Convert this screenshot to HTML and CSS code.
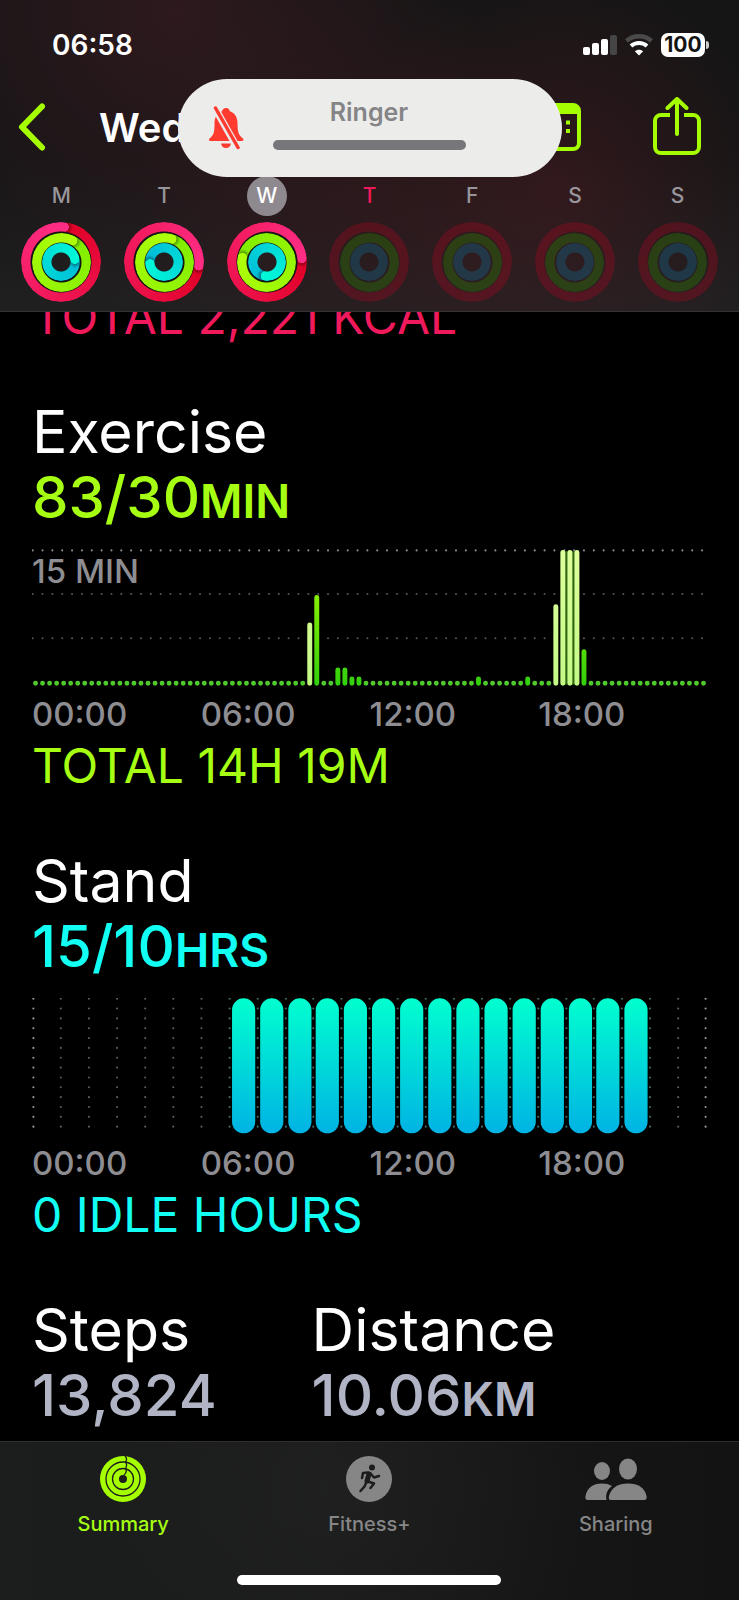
FILE: index.html
```
<!DOCTYPE html>
<html lang="en">
<head>
  <meta charset="UTF-8">
  <meta name="viewport" content="width=device-width, initial-scale=1.0">
  <title>Fitness</title>
  <link rel="stylesheet" href="styles.css">
</head>
<body>
  <header class="top">
    <div class="status">
      <span class="clock">06:58</span>
      <div class="status-icons">
        <svg width="34" height="22" viewBox="0 0 34 22" fill="#fff" aria-hidden="true">
          <rect x="0" y="13" width="7" height="8" rx="2"/>
          <rect x="9" y="9" width="7" height="12" rx="2"/>
          <rect x="18" y="5" width="7" height="16" rx="2"/>
          <rect x="27" y="1" width="7" height="20" rx="2" fill="#454545"/>
        </svg>
        <svg width="28" height="22" viewBox="0 0 28 22" fill="none" stroke="#fff" aria-hidden="true">
          <path d="M1.500 7C8.500.8 19.500.8 26.500 7" stroke="#4a4a4a" stroke-width="4.500"/>
          <path d="M6 12C10.500 8 17.500 8 22 12" stroke-width="4"/>
          <path d="M14 21.500L9.800 17.300C12 15.200 16 15.200 18.200 17.300Z" fill="#fff" stroke="none"/>
        </svg>
        <div class="battery">100</div>
      </div>
    </div>

    <div class="title-bar">
      <button class="icon-btn" aria-label="Back">
        <svg width="28" height="48" viewBox="0 0 28 48" aria-hidden="true"><path d="M24 3.500L4 24L24 44.500" stroke-width="6"/></svg>
      </button>
      <h1>Wednesday</h1>
      <button class="icon-btn" aria-label="Calendar">
        <svg width="48" height="50" viewBox="0 0 48 50" aria-hidden="true">
          <rect x="2" y="3" width="44" height="44" rx="6" stroke-width="4"/>
          <path d="M2 12V8a6 6 0 0 1 6-6H40a6 6 0 0 1 6 6V12Z" fill="#a6ff00" stroke="none"/>
          <path d="M11 20.500h4M22 20.500h4M33 20.500h4M11 29h4M22 29h4M33 29h4" stroke-width="4" stroke-linecap="butt"/>
        </svg>
      </button>
      <button class="icon-btn" aria-label="Share">
        <svg width="48" height="60" viewBox="0 0 48 60" aria-hidden="true">
          <path d="M17 18H8a6 6 0 0 0-6 6V50a6 6 0 0 0 6 6H40a6 6 0 0 0 6-6V24a6 6 0 0 0-6-6H31" stroke-width="4" stroke-linecap="butt"/>
          <path d="M24 37V2.500M14.500 11L24 2L33.500 11" stroke-width="4"/>
        </svg>
      </button>
    </div>

    <div class="week">
      <button class="day">
        <span class="letter">M</span>
        <span class="rings">
          <span class="ring move" style="--tip: 5deg"></span>
          <span class="ring exercise" style="--tip: 27deg"></span>
          <span class="ring stand" style="--tip: 78deg"></span>
        </span>
      </button>
      <button class="day">
        <span class="letter">T</span>
        <span class="rings">
          <span class="ring move" style="--tip: 96deg"></span>
          <span class="ring exercise" style="--tip: 17deg"></span>
          <span class="ring stand" style="--tip: 262deg"></span>
        </span>
      </button>
      <button class="day selected">
        <span class="letter">W</span>
        <span class="rings">
          <span class="ring move" style="--tip: 84deg"></span>
          <span class="ring exercise" style="--tip: 281deg"></span>
          <span class="ring stand" style="--tip: 186deg"></span>
        </span>
      </button>
      <button class="day today empty">
        <span class="letter">T</span>
        <span class="rings"><span class="ring move"></span><span class="ring exercise"></span><span class="ring stand"></span></span>
      </button>
      <button class="day empty">
        <span class="letter">F</span>
        <span class="rings"><span class="ring move"></span><span class="ring exercise"></span><span class="ring stand"></span></span>
      </button>
      <button class="day empty">
        <span class="letter">S</span>
        <span class="rings"><span class="ring move"></span><span class="ring exercise"></span><span class="ring stand"></span></span>
      </button>
      <button class="day empty">
        <span class="letter">S</span>
        <span class="rings"><span class="ring move"></span><span class="ring exercise"></span><span class="ring stand"></span></span>
      </button>
    </div>
  </header>

  <div class="ringer" role="status">
    <svg width="36" height="44" viewBox="0 0 36 44" aria-hidden="true">
      <path d="M18 2c2.500 0 3.600 1.600 3.800 3.200C27 7 29.500 11.500 29.500 17c0 9 1 12 5.500 15.500c1 1 .5 2.500-1 2.500H2.500c-1.500 0-2-1.500-1-2.500C6 29 6.500 26 6.500 17c0-5.500 2.500-10 7.700-11.800C14.400 3.600 15.500 2 18 2Z" fill="#ff3b30"/>
      <path d="M13 37.500h10c-.5 3-2.500 4.500-5 4.500s-4.500-1.500-5-4.500Z" fill="#ff3b30"/>
      <path d="M7 2L30 43" stroke="#ececec" stroke-width="7"/>
      <path d="M7.500 2L30 41.500" stroke="#ff3b30" stroke-width="3.500" stroke-linecap="round"/>
    </svg>
    <div class="ringer-level">
      <span>Ringer</span>
      <div class="ringer-bar"></div>
    </div>
  </div>

  <main>
    <section class="metric move-text">
      <p class="total">TOTAL 2,221 KCAL</p>
    </section>

    <section class="metric exercise-text">
      <h2>Exercise</h2>
      <p class="value">83/30<small>MIN</small></p>
      <div class="chart">
        <!-- 96 slots of 15 minutes, 10 units each -->
        <svg viewBox="0 0 960 195" fill="none" stroke-linecap="round" aria-hidden="true">
          <defs>
            <linearGradient id="green" gradientUnits="userSpaceOnUse" x1="0" y1="0" x2="0" y2="195">
              <stop offset="0" stop-color="#b4ff00"/>
              <stop offset="1" stop-color="#30cf0c"/>
            </linearGradient>
            <linearGradient id="pale" gradientUnits="userSpaceOnUse" x1="0" y1="0" x2="0" y2="195">
              <stop offset="0" stop-color="#deff9c"/>
              <stop offset="1" stop-color="#c4fa86"/>
            </linearGradient>
          </defs>
          <g stroke-width="3" stroke-dasharray="0 14">
            <path d="M1 2H958" stroke="#8a8a8a"/>
            <path d="M1 64H958M1 127H958" stroke="#565656"/>
          </g>
          <path d="M5 191H386M415 191H426M475 191H626M645 191H696M715 191H736M795 191H956" stroke="#4fc92c" stroke-width="7" stroke-dasharray="0 10"/>
          <rect x="752" y="3" width="26" height="190" fill="#2f6510"/>
          <path d="M405 69V191M435 172V191M445 172V191M455 185V191M465 185V191M635 185V191M705 185V191M785 146V191" stroke="url(#green)" stroke-width="7"/>
          <path d="M395 108V191M745 82V191M755 5V191M765 5V191M775 5V191" stroke="url(#pale)" stroke-width="7"/>
        </svg>
        <span class="scale">15 MIN</span>
      </div>
      <div class="hours"><span>00:00</span><span>06:00</span><span>12:00</span><span>18:00</span></div>
      <p class="total">TOTAL 14H 19M</p>
    </section>

    <section class="metric stand-text">
      <h2>Stand</h2>
      <p class="value">15/10<small>HRS</small></p>
      <div class="chart">
        <!-- 24 hours, 40 units each -->
        <svg viewBox="0 0 960 195" fill="none" stroke-linecap="round" aria-hidden="true">
          <defs>
            <linearGradient id="cyan" gradientUnits="userSpaceOnUse" x1="0" y1="0" x2="0" y2="195">
              <stop offset="0" stop-color="#00ffcf"/>
              <stop offset="1" stop-color="#00b2e4"/>
            </linearGradient>
          </defs>
          <g stroke-width="3" stroke-dasharray="0 14">
            <path d="M2 1V184M958 1V184" stroke="#9a9a9a"/>
            <path d="M41 1V184M81 1V184M121 1V184M161 1V184M201 1V184M241 1V184M919 1V184" stroke="#5c5c5c"/>
            <path d="M281 1V184M321 1V184M361 1V184M400 1V184M440 1V184M480 1V184M520 1V184M560 1V184M600 1V184M640 1V184M680 1V184M720 1V184M760 1V184M799 1V184M839 1V184M879 1V184" stroke="#3f6c69"/>
          </g>
          <path d="M301 17V176M341 17V176M381 17V176M420 17V176M460 17V176M500 17V176M540 17V176M580 17V176M620 17V176M660 17V176M700 17V176M740 17V176M780 17V176M819 17V176M859 17V176" stroke="url(#cyan)" stroke-width="33"/>
        </svg>
      </div>
      <div class="hours"><span>00:00</span><span>06:00</span><span>12:00</span><span>18:00</span></div>
      <p class="total">0 IDLE HOURS</p>
    </section>

    <div class="pair">
      <section>
        <h2>Steps</h2>
        <p class="value">13,824</p>
      </section>
      <section>
        <h2>Distance</h2>
        <p class="value">10.06<small>KM</small></p>
      </section>
    </div>
  </main>

  <nav class="tabs">
    <a href="#summary" class="tab active">
      <svg width="46" height="46" viewBox="0 0 46 46" aria-hidden="true">
        <circle cx="23" cy="23" r="23" fill="#a6ff00"/>
        <g fill="none" stroke="#1d1d1d" stroke-width="1.300">
          <circle cx="23" cy="23" r="17"/>
          <circle cx="23" cy="23" r="10.500"/>
          <path d="M25 0C27 2 27 4 25.500 6C27 8 27 10 25.500 12.500C27 15 26.500 17 24 19"/>
        </g>
        <circle cx="23" cy="23" r="4" fill="#1d1d1d"/>
      </svg>
      Summary
    </a>
    <a href="#fitness" class="tab">
      <svg width="46" height="46" viewBox="0 0 46 46" aria-hidden="true">
        <circle cx="23" cy="23" r="23" fill="#868686"/>
        <circle cx="26" cy="11.500" r="3" fill="#1d1d1d"/>
        <g fill="none" stroke="#1d1d1d" stroke-linecap="round" stroke-linejoin="round">
          <path d="M23 18L21 25" stroke-width="5"/>
          <path d="M22 16.500L17 17L16 22M24.500 17.500L28 21.500L33 20M20 27L18.500 30.500L14.500 35M22 25.500L28 27.500L24.500 32" stroke-width="2.500"/>
        </g>
      </svg>
      Fitness+
    </a>
    <a href="#sharing" class="tab">
      <svg width="62" height="46" viewBox="0 0 62 46" fill="#868686" aria-hidden="true">
        <ellipse cx="17" cy="15" rx="8" ry="9"/>
        <path d="M3 44C1 44 0 43 .5 40C2 32 8 27.500 17 27.500c4 0 7 .8 10 2.500C22 34 20.500 38 21.500 44Z"/>
        <ellipse cx="43" cy="13" rx="9" ry="10.500"/>
        <path d="M26 44C24 44 23.500 43 24 40C26 32 33 27.500 43 27.500S60 32 61.500 40c.5 3-.5 4-2.500 4Z"/>
      </svg>
      Sharing
    </a>
    <div class="home-indicator"></div>
  </nav>
</body>
</html>
```
FILE: styles.css
```
* {
  box-sizing: border-box;
}
body {
  font-family: Inter, "Liberation Sans", sans-serif;
  background: #000;
  color: #fff;
  margin: 0;
  min-height: 100vh;
  display: flex;
  flex-direction: column;
  position: relative;
}
h1, h2, p {
  margin: 0;
}
button {
  background: none;
  border: none;
  padding: 0;
  font: inherit;
  color: inherit;
  cursor: pointer;
}
svg {
  display: block;
}

/* header */
.top {
  position: sticky;
  top: 0;
  z-index: 1;
  background:
    radial-gradient(circle 300px at 24% 4%, rgba(90, 32, 46, 0.35), transparent),
    radial-gradient(circle 220px at 76% 60%, rgba(90, 28, 38, 0.4), transparent),
    radial-gradient(circle 220px at 48% 65%, rgba(80, 26, 34, 0.3), transparent),
    linear-gradient(#151515 50%, #212021);
  border-bottom: 1px solid #343234;
}
.status {
  height: 89px;
  padding: 0 31px 0 52px;
  display: flex;
  align-items: center;
  justify-content: space-between;
}
.clock {
  font-size: 28px;
  font-weight: 600;
}
.status-icons {
  display: flex;
  align-items: center;
  gap: 8px;
}
.battery {
  width: 44px;
  height: 24px;
  margin-right: 3px;
  border-radius: 7px;
  background: #fff;
  color: #141414;
  font-size: 21px;
  font-weight: 700;
  line-height: 24px;
  text-align: center;
  position: relative;
}
.battery::after {
  content: "";
  position: absolute;
  left: 45px;
  top: 8px;
  width: 3px;
  height: 8px;
  border-radius: 0 4px 4px 0;
  background: #ccc;
}
.title-bar {
  height: 76px;
  padding: 0 38px 0 18px;
  display: flex;
  align-items: center;
}
.title-bar h1 {
  flex: 1;
  margin-left: 53px;
  font-size: 40px;
  font-weight: 600;
}
.icon-btn svg {
  fill: none;
  stroke: #a6ff00;
  stroke-linecap: round;
  stroke-linejoin: round;
}
.icon-btn + .icon-btn {
  margin-left: 72px;
}
.week {
  display: grid;
  grid-template-columns: repeat(7, 1fr);
  padding: 11px 10px 9px;
}
.day {
  display: flex;
  flex-direction: column;
  align-items: center;
  gap: 6px;
}
.letter {
  width: 40px;
  height: 40px;
  border-radius: 50%;
  font-size: 21px;
  font-weight: 500;
  line-height: 40px;
  color: #98969a;
}
.selected .letter {
  background: #8e888f;
  color: #fff;
}
.today .letter {
  color: #f0195c;
}

/* activity rings */
.rings {
  width: 80px;
  height: 80px;
  display: grid;
  place-items: center;
  border-radius: 50%;
  background: radial-gradient(circle, transparent 9px, #141414 10px, #141414 31px, transparent 32px);
}
.ring {
  grid-area: 1 / 1;
  border-radius: 50%;
  background: conic-gradient(from var(--tip), var(--start), var(--end));
  mask: radial-gradient(closest-side, transparent calc(100% - 10px), #000 calc(100% - 9px));
}
.ring::before {
  content: "";
  display: block;
  height: 100%;
  transform: rotate(var(--tip));
  background:
    radial-gradient(circle 5px at 50% 5px, var(--end) 90%, transparent),
    radial-gradient(circle 7px at calc(50% + 2px) 5px, rgba(0, 0, 0, 0.3) 50%, transparent);
}
.move {
  --start: #e00025;
  --end: #ff2d86;
  width: 80px;
  height: 80px;
}
.exercise {
  --start: #80ec00;
  --end: #aeff08;
  width: 59px;
  height: 59px;
}
.stand {
  --start: #00b8d8;
  --end: #00f8d8;
  width: 38px;
  height: 38px;
}
.empty .rings {
  background: none;
}
.empty .ring::before {
  display: none;
}
.empty .move {
  background: rgba(160, 8, 34, 0.36);
}
.empty .exercise {
  background: rgba(44, 100, 10, 0.5);
}
.empty .stand {
  background: rgba(24, 84, 112, 0.5);
}

/* ringer banner, floats over the header */
.ringer {
  position: absolute;
  z-index: 2;
  top: 79px;
  left: 50%;
  transform: translateX(-50%);
  width: 384px;
  height: 98px;
  padding: 0 30px;
  display: flex;
  align-items: center;
  gap: 29px;
  border-radius: 49px;
  background: #ececeb;
}
.ringer-level {
  width: 193px;
  padding-bottom: 10px;
  display: flex;
  flex-direction: column;
  gap: 12px;
  font-size: 25px;
  font-weight: 600;
  line-height: 32px;
  text-align: center;
  color: #858587;
}
.ringer-bar {
  height: 10px;
  border-radius: 5px;
  background: #77777b;
}

/* day details */
main {
  flex: 1;
  margin-top: -25px;
  padding: 0 32px;
}
.metric {
  margin-bottom: 54px;
}
h2 {
  padding-bottom: 2px;
  font-size: 59px;
  font-weight: 400;
  line-height: 62px;
}
.value {
  font-size: 58px;
  font-weight: 500;
  line-height: 64px;
}
.value small {
  font-size: 46px;
  font-weight: 600;
  line-height: 1;
}
.total {
  font-size: 48px;
  line-height: 60px;
}
.move-text p {
  color: #f0195c;
}
.exercise-text p {
  color: #a6ff12;
}
.stand-text p {
  color: #12fff4;
}
.chart {
  display: grid;
  margin-top: 20px;
}
.chart svg, .scale {
  grid-area: 1 / 1;
}
.chart svg {
  width: 100%;
}
.scale, .hours {
  font-size: 33px;
  font-weight: 500;
  line-height: 44px;
  color: #8e8d92;
}
.hours {
  display: grid;
  grid-template-columns: repeat(4, 1fr);
  margin-top: 6px;
}
.pair {
  display: grid;
  grid-template-columns: 2fr 3fr;
  gap: 16px;
}
.pair .value {
  color: #b0b4c4;
}

/* bottom tabs */
.tabs {
  position: sticky;
  bottom: 0;
  display: grid;
  grid-template-columns: repeat(3, 1fr);
  padding: 14px 0 15px;
  background:
    radial-gradient(circle 260px at 45% 30%, rgba(60, 60, 60, 0.2), transparent),
    linear-gradient(90deg, #1c1d1d, #131313);
  border-top: 1px solid #2e2e2e;
}
.tab {
  display: flex;
  flex-direction: column;
  align-items: center;
  gap: 10px;
  font-size: 20px;
  font-weight: 500;
  line-height: 24px;
  color: #868686;
  text-decoration: none;
}
.tab.active {
  color: #a6ff12;
}
.home-indicator {
  grid-column: 1 / -1;
  justify-self: center;
  width: 264px;
  height: 10px;
  margin-top: 39px;
  border-radius: 5px;
  background: #fff;
}
```
